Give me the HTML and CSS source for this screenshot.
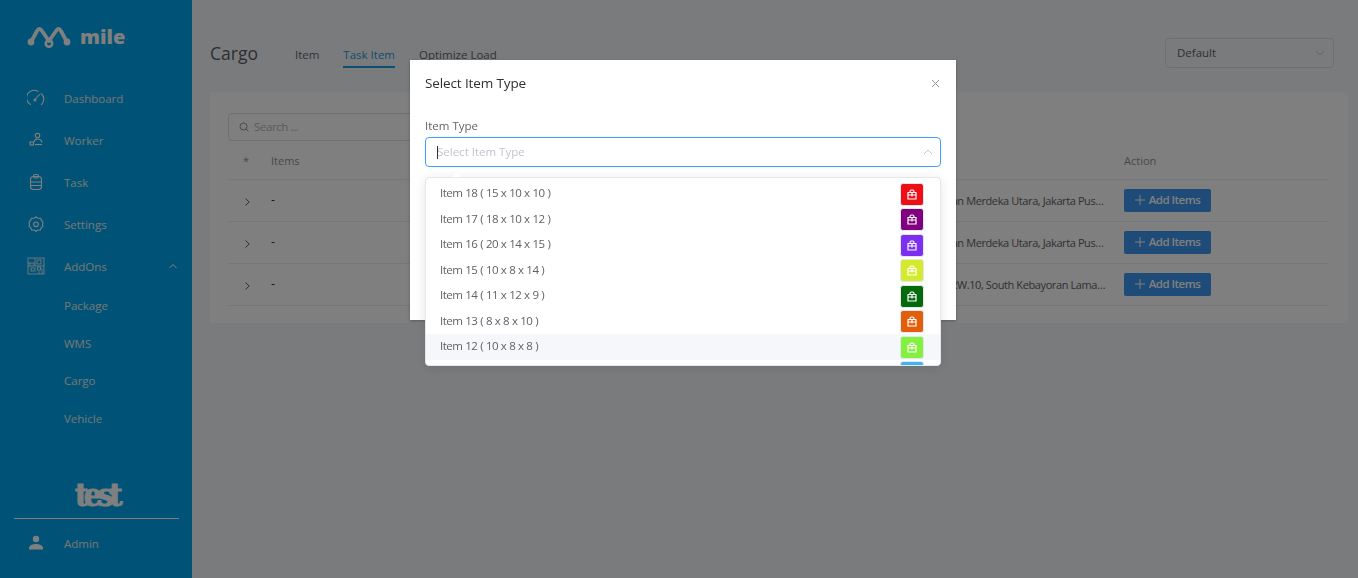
FILE: index.html
```html
<!DOCTYPE html>
<html lang="en">
<head>
<meta charset="utf-8">
<title>Cargo</title>
<link rel="stylesheet" href="styles.css">
</head>
<body>
<div class="app">
  <aside class="sidebar">
    <div class="brand">
      <svg class="brand-mark" width="46" height="26" viewBox="0 0 46 26"><path d="M4 18 L10 7 Q12.500 3 15 7 L22 17 M22 17 L29 7 Q31.500 3 34 7 L40 18" fill="none" stroke="#fff" stroke-width="3.800" stroke-linecap="round" stroke-linejoin="round"/><circle cx="4" cy="18" r="3.400" fill="#fff"/><circle cx="22" cy="19.500" r="3.200" fill="none" stroke="#fff" stroke-width="2.600"/><circle cx="40" cy="18" r="3.400" fill="#fff"/></svg>
      <span class="brand-name">mile</span>
    </div>
    <nav class="nav">
      <a class="nav-row"><span class="nav-icon"><svg width="18" height="18" viewBox="0 0 18 18" fill="none" stroke="#fff" stroke-width="1.100" stroke-linecap="round"><path d="M3.500 15.500A7.200 7.200 0 0 1 11 2.200M14 4.500A7.200 7.200 0 0 1 14.500 15.500"/><path d="M8 10.500L12.500 5.500"/><circle cx="8" cy="11" r="1"/></svg></span>Dashboard</a>
      <a class="nav-row"><span class="nav-icon"><svg width="18" height="18" viewBox="0 0 18 18" fill="none" stroke="#fff" stroke-width="1.100"><circle cx="10.500" cy="4.500" r="2.200"/><path d="M7 11Q7.500 8 10.500 8Q14.500 8 15 11.500"/><rect x="3" y="11" width="3.500" height="3"/><path d="M8 13.500H15"/></svg></span>Worker</a>
      <a class="nav-row"><span class="nav-icon"><svg width="18" height="18" viewBox="0 0 18 18" fill="none" stroke="#fff" stroke-width="1.100"><rect x="3.500" y="3.500" width="11" height="13" rx="3"/><rect x="6.500" y="1.500" width="5" height="3.500" rx="1.500"/><path d="M3.500 9H14.500M3.500 12.500H14.500"/></svg></span>Task</a>
      <a class="nav-row"><span class="nav-icon"><svg width="18" height="18" viewBox="0 0 18 18" fill="none" stroke="#fff" stroke-width="1.100"><path d="M9 2L11 3.300L13.500 3.200L14.500 5.400L16 7.200L15.500 9.500L16 11.400L14.200 12.800L13.400 15L11 15L9 16.300L7 15L4.600 15L3.800 12.800L2 11.400L2.500 9.500L2 7.200L3.500 5.400L4.500 3.200L7 3.300Z"/><circle cx="9" cy="9.300" r="2.300"/></svg></span>Settings</a>
      <a class="nav-row"><span class="nav-icon"><svg width="18" height="18" viewBox="0 0 18 18" fill="none" stroke="#fff" stroke-width="0.800"><rect x="1" y="1" width="16" height="16"/><rect x="3" y="6" width="4" height="3"/><rect x="10" y="3" width="4" height="4"/><rect x="4" y="11" width="4" height="3"/><rect x="10.500" y="10" width="3" height="3"/><path d="M1 6H3M1 9H3M8 1V9M8 9H17M12 14V17M15 11V17"/></svg></span>AddOns<svg class="nav-caret" width="10" height="6" viewBox="0 0 10 6" fill="none" stroke="#fff" stroke-width="1"><path d="M1.500 5L5 1.500L8.500 5"/></svg></a>
      <div class="subnav">
        <a class="sub-row">Package</a>
        <a class="sub-row">WMS</a>
        <a class="sub-row">Cargo</a>
        <a class="sub-row">Vehicle</a>
      </div>
    </nav>
    <div class="side-foot">
      <div class="tenant">test</div>
      <a class="nav-row admin"><span class="nav-icon"><svg width="18" height="18" viewBox="0 0 18 18" fill="#fff"><circle cx="9" cy="5" r="3.200"/><path d="M2 15.500V13.500Q3 10 9 10Q15 10 16 13.500V15.500Z"/></svg></span>Admin</a>
    </div>
  </aside>

  <main class="main">
    <header class="topbar">
      <h1 class="page-title">Cargo</h1>
      <div class="tabs">
        <a class="tab">Item</a>
        <a class="tab tab-active">Task Item</a>
        <a class="tab">Optimize Load</a>
      </div>
      <div class="select-default"><span class="lift">Default</span><svg width="10" height="6" viewBox="0 0 10 6" fill="none" stroke="#c0c4cc" stroke-width="1"><path d="M1 1L5 5L9 1"/></svg></div>
    </header>
    <section class="card">
      <div class="search"><svg width="10" height="10" viewBox="0 0 10 10" fill="none" stroke="#909399" stroke-width="1"><circle cx="4.500" cy="4.500" r="3.500"/><path d="M7 7L9.500 9.500"/></svg><span class="lift">Search ...</span></div>
      <div class="table">
        <div class="tr th"><span class="c-exp">*</span><span class="c-items">Items</span><span class="c-addr"></span><span class="c-act">Action</span></div>
        <div class="tr">
          <span class="c-exp"><svg width="5" height="8" viewBox="0 0 5 8" fill="none" stroke="#606266" stroke-width="1"><path d="M0.500 0.500L4.200 4L0.500 7.500"/></svg></span><span class="c-items dash">-</span>
          <span class="c-addr">Jalan Merdeka Utara, Jakarta Pusat, DKI Jakarta</span>
          <span class="c-act"><button class="add-btn"><svg width="10" height="10" viewBox="0 0 10 10" stroke="#fff" stroke-width="1"><path d="M5 0V10M0 5H10"/></svg>Add Items</button></span>
        </div>
        <div class="tr">
          <span class="c-exp"><svg width="5" height="8" viewBox="0 0 5 8" fill="none" stroke="#606266" stroke-width="1"><path d="M0.500 0.500L4.200 4L0.500 7.500"/></svg></span><span class="c-items dash">-</span>
          <span class="c-addr">Jalan Merdeka Utara, Jakarta Pusat, DKI Jakarta</span>
          <span class="c-act"><button class="add-btn"><svg width="10" height="10" viewBox="0 0 10 10" stroke="#fff" stroke-width="1"><path d="M5 0V10M0 5H10"/></svg>Add Items</button></span>
        </div>
        <div class="tr">
          <span class="c-exp"><svg width="5" height="8" viewBox="0 0 5 8" fill="none" stroke="#606266" stroke-width="1"><path d="M0.500 0.500L4.200 4L0.500 7.500"/></svg></span><span class="c-items dash">-</span>
          <span class="c-addr">1/RW.10, South Kebayoran Lama, Jakarta Selatan</span>
          <span class="c-act"><button class="add-btn"><svg width="10" height="10" viewBox="0 0 10 10" stroke="#fff" stroke-width="1"><path d="M5 0V10M0 5H10"/></svg>Add Items</button></span>
        </div>
      </div>
    </section>
  </main>
</div>

<div class="mask"></div>

<div class="modal">
  <div class="modal-head">
    <span class="modal-title">Select Item Type</span>
    <svg width="9" height="9" viewBox="0 0 9 9" fill="none" stroke="#909399" stroke-width="1"><path d="M1 1L8 8M8 1L1 8"/></svg>
  </div>
  <label class="field-label">Item Type</label>
  <div class="field-input"><i class="caret"></i><span class="lift">Select Item Type</span><svg width="10" height="6" viewBox="0 0 10 6" fill="none" stroke="#c0c4cc" stroke-width="1"><path d="M1 5L5 1L9 5"/></svg></div>
</div>

<div class="dropdown">
  <div class="option"><span class="lift">Item 18 ( 15 x 10 x 10 )</span><b class="swatch s1"><svg width="10" height="11" viewBox="0 0 10 11" fill="none" stroke="#fff" stroke-width="1.200"><path d="M1 3.500H9V10H1ZM3 3.500V2.500Q3 1 4.500 1H5.500Q7 1 7 2.500V3.500M1 6H9M5 3.500V7.500"/></svg></b></div>
  <div class="option"><span class="lift">Item 17 ( 18 x 10 x 12 )</span><b class="swatch s2"><svg width="10" height="11" viewBox="0 0 10 11" fill="none" stroke="#fff" stroke-width="1.200"><path d="M1 3.500H9V10H1ZM3 3.500V2.500Q3 1 4.500 1H5.500Q7 1 7 2.500V3.500M1 6H9M5 3.500V7.500"/></svg></b></div>
  <div class="option"><span class="lift">Item 16 ( 20 x 14 x 15 )</span><b class="swatch s3"><svg width="10" height="11" viewBox="0 0 10 11" fill="none" stroke="#fff" stroke-width="1.200"><path d="M1 3.500H9V10H1ZM3 3.500V2.500Q3 1 4.500 1H5.500Q7 1 7 2.500V3.500M1 6H9M5 3.500V7.500"/></svg></b></div>
  <div class="option"><span class="lift">Item 15 ( 10 x 8 x 14 )</span><b class="swatch s4"><svg width="10" height="11" viewBox="0 0 10 11" fill="none" stroke="#fff" stroke-width="1.200"><path d="M1 3.500H9V10H1ZM3 3.500V2.500Q3 1 4.500 1H5.500Q7 1 7 2.500V3.500M1 6H9M5 3.500V7.500"/></svg></b></div>
  <div class="option"><span class="lift">Item 14 ( 11 x 12 x 9 )</span><b class="swatch s5"><svg width="10" height="11" viewBox="0 0 10 11" fill="none" stroke="#fff" stroke-width="1.200"><path d="M1 3.500H9V10H1ZM3 3.500V2.500Q3 1 4.500 1H5.500Q7 1 7 2.500V3.500M1 6H9M5 3.500V7.500"/></svg></b></div>
  <div class="option"><span class="lift">Item 13 ( 8 x 8 x 10 )</span><b class="swatch s6"><svg width="10" height="11" viewBox="0 0 10 11" fill="none" stroke="#fff" stroke-width="1.200"><path d="M1 3.500H9V10H1ZM3 3.500V2.500Q3 1 4.500 1H5.500Q7 1 7 2.500V3.500M1 6H9M5 3.500V7.500"/></svg></b></div>
  <div class="option option-hover"><span class="lift">Item 12 ( 10 x 8 x 8 )</span><b class="swatch s7"><svg width="10" height="11" viewBox="0 0 10 11" fill="none" stroke="#fff" stroke-width="1.200"><path d="M1 3.500H9V10H1ZM3 3.500V2.500Q3 1 4.500 1H5.500Q7 1 7 2.500V3.500M1 6H9M5 3.500V7.500"/></svg></b></div>
  <div class="option"><span></span><b class="swatch s8"></b></div>
</div>
<i class="dropdown-arrow"></i>
</body>
</html>
```
FILE: styles.css
```css
* { box-sizing: border-box; }
html, body { margin: 0; height: 100%; overflow: hidden; }
body { font-family: "Open Sans", "Noto Sans", sans-serif; font-size: 12px; color: #606266; background: #f4f6fa; }
a { color: inherit; text-decoration: none; }
.lift { padding-bottom: 2px; }

.app { display: flex; height: 578px; }

.sidebar { width: 192px; flex: none; background: #00a6ec; color: #ececec; display: flex; flex-direction: column; }
.brand { height: 77px; display: flex; align-items: flex-start; padding: 24px 0 0 27px; gap: 7px; }
.brand-mark { display: block; }
.brand-name { font-size: 20px; font-weight: 800; line-height: 26px; color: #fff; }
.nav { display: flex; flex-direction: column; }
.nav-row { height: 42px; display: flex; align-items: center; padding-left: 27px; font-size: 11.500px; }
.nav-icon { width: 18px; height: 18px; margin-right: 19px; display: block; }
.nav-icon svg { display: block; }
.nav-caret { margin-left: auto; margin-right: 14px; }
.sub-row { height: 37.500px; display: flex; align-items: center; padding-left: 64px; font-size: 11.500px; }
.side-foot { margin-top: auto; padding-bottom: 11px; display: flex; flex-direction: column; }
.tenant { margin: 0 13px 0 14px; padding-bottom: 3px; border-bottom: 1px solid #fff; text-align: center; font-family: "DejaVu Serif Condensed", "DejaVu Serif", serif; font-weight: 700; font-size: 32px; line-height: 39px; letter-spacing: -4.500px; color: #fff; -webkit-text-stroke: 1px #fff; }
.admin { height: 48px; }

.main { flex: 1; min-width: 0; padding: 38px 10px 0 18px; display: flex; flex-direction: column; }
.topbar { height: 30px; display: flex; align-items: center; padding-right: 14px; margin-bottom: 24px; }
.page-title { margin: 0 37px 0 0; font-size: 17.500px; font-weight: 400; color: #5a5f66; line-height: 30px; }
.tabs { display: flex; gap: 24px; margin-top: 3px; }
.tab { font-size: 11.500px; color: #5f666c; height: 24px; line-height: 21px; border-bottom: 2px solid transparent; margin-top: 3px; }
.tab-active { color: #2b97dc; border-bottom-color: #12a0e8; }
.select-default { margin-left: auto; width: 169px; height: 30px; border: 1px solid #dcdfe6; border-radius: 4px; background: #f4f6fa; display: flex; align-items: center; justify-content: space-between; padding: 0 8px 0 11px; font-size: 11.500px; }

.card { height: 231px; background: #fff; padding: 21px 19px 0 18px; }
.search { width: 360px; height: 28px; border: 1px solid #dcdfe6; border-radius: 4px; display: flex; align-items: center; gap: 5px; padding-left: 10px; color: #b4b8c0; font-size: 11.500px; letter-spacing: -0.400px; }
.table { margin-top: 2px; }
.tr { height: 42px; border-bottom: 1px solid #ebeef5; display: grid; grid-template-columns: 43px 670px 183px 1fr; align-items: center; }
.th { height: 37px; color: #909399; font-size: 11px; }
.th span { padding-bottom: 2px; }
.c-exp { padding-left: 17px; }
.c-exp svg { display: block; margin-top: 3px; }
.th .c-exp { padding-left: 15px; }
.dash { color: #303133; margin-top: -2px; }
.c-addr { white-space: nowrap; overflow: hidden; text-overflow: ellipsis; padding-right: 17px; font-size: 11px; letter-spacing: -0.400px; }
.add-btn { width: 87px; height: 23px; border: 0; border-radius: 2px; background: #3d96f0; color: #fff; font: inherit; font-size: 11.500px; font-weight: 600; letter-spacing: -0.500px; display: flex; align-items: center; justify-content: center; gap: 4px; padding: 0 0 2px; }

.mask { position: fixed; inset: 0; background: rgba(0,0,0,.5); }

.modal { position: fixed; left: 410px; top: 60px; width: 546px; height: 260px; background: #fff; padding: 0 15px; box-shadow: 0 1px 3px rgba(0,0,0,.3); }
.modal-head { height: 46px; display: flex; align-items: center; justify-content: space-between; padding-right: 1px; }
.modal-title { font-size: 13.500px; color: #303133; letter-spacing: -0.120px; }
.field-label { display: block; margin-top: 12px; height: 19px; font-size: 11.500px; line-height: 15px; color: #606266; }
.field-input { position: relative; height: 30px; border: 1px solid #409eff; border-radius: 4px; display: flex; align-items: center; justify-content: space-between; padding: 0 7px 0 11px; color: #c0c4cc; font-size: 11.500px; }
.caret { position: absolute; left: 11px; top: 8px; width: 1px; height: 13px; background: #303133; }

.dropdown { position: fixed; left: 425px; top: 177px; width: 516px; height: 189px; padding-top: 3px; background: #fff; border: 1px solid #e4e7ed; border-radius: 4px; overflow: hidden; box-shadow: 0 2px 12px rgba(0,0,0,.1); }
.dropdown-arrow { position: fixed; left: 452px; top: 172px; width: 0; height: 0; border: 5.500px solid transparent; border-top: 0; border-bottom-color: #fff; }
.option { height: 25.500px; display: flex; align-items: center; justify-content: space-between; padding: 0 16px 0 14px; font-size: 11.500px; letter-spacing: -0.500px; word-spacing: 0.320px; color: #606266; }
.option-hover { background: #f5f7fa; }
.swatch { width: 24px; height: 23px; flex: none; margin-top: 1px; border: 1px solid #e4e7ed; border-radius: 3px; display: flex; align-items: center; justify-content: center; }
.swatch svg { display: block; }
.s1 { background: #ee0f16; }
.s2 { background: #800080; }
.s3 { background: #7b2ff0; }
.s4 { background: #d4ea2e; }
.s5 { background: #056a0b; }
.s6 { background: #e35e0a; }
.s7 { background: #84f03e; }
.s8 { background: #3eb3ef; }
```
